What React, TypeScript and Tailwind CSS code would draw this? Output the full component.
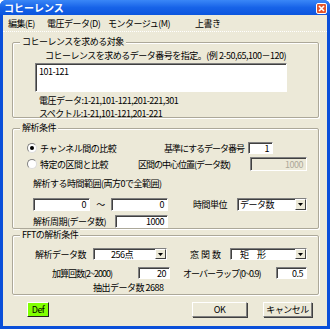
import React from 'react'

const sunken =
  'border border-t-[#808080] border-l-[#808080] border-b-white border-r-white shadow-[inset_1px_1px_0_#404040]'

function Field({ w, h, value, disabled }: { w: number; h: number; value: string; disabled?: boolean }) {
  return (
    <div
      className={`${sunken} flex items-center justify-end pr-[3px] leading-none ${
        disabled ? 'bg-[#ece9d8] text-[#aca899]' : 'bg-white'
      }`}
      style={{ width: w, height: h }}
    >
      {value}
    </div>
  )
}

function Combo({ w, h, text, pl, wide }: { w: number; h: number; text: string; pl: number; wide?: boolean }) {
  return (
    <div className={`${sunken} bg-white flex items-center leading-none`} style={{ width: w, height: h }}>
      <span className={`flex-1 ${wide ? 'tracking-[3px]' : ''}`} style={{ paddingLeft: pl }}>
        {text}
      </span>
      <div className="w-[11px] h-full flex items-center justify-center bg-[#ece9d8] border border-t-white border-l-white border-b-[#404040] border-r-[#404040]">
        <svg width="5" height="3" viewBox="0 0 5 3">
          <path d="M0 0h5L2.5 3z" fill="#000" />
        </svg>
      </div>
    </div>
  )
}

function Radio({ checked }: { checked?: boolean }) {
  return (
    <div className="w-[10px] h-[10px] rounded-full bg-white border border-t-[#808080] border-l-[#808080] border-b-[#dcdcdc] border-r-[#dcdcdc] flex items-center justify-center">
      {checked && <div className="w-[4px] h-[4px] rounded-full bg-black" />}
    </div>
  )
}

function Group({ label, h, children }: { label: string; h: number; children: React.ReactNode }) {
  return (
    <div
      className="relative ml-[9px] w-[307px] border border-[#aca899] rounded-[2px] shadow-[inset_1px_1px_0_#fff,1px_1px_0_#fff]"
      style={{ height: h }}
    >
      <span className="absolute left-[7px] -top-[7px] px-[2px] bg-[#ece9d8] leading-[12px]">{label}</span>
      {children}
    </div>
  )
}

export default function App() {
  return (
    <div className="w-[330px] h-[329px] bg-[#0a4fd9] rounded-t-[6px] overflow-hidden flex flex-col font-['Noto_Sans_CJK_JP',sans-serif] text-[9px] tracking-[-0.5px] text-black">
      {/* タイトルバー */}
      <div className="h-[15px] flex items-center justify-between pl-[4px] pr-[3px] bg-gradient-to-b from-[#3a87f7] via-[#1763e8] to-[#0b55de]">
        <span className="text-white font-bold text-[10px] leading-none tracking-[0px]">コヒーレンス</span>
        <div className="w-[11px] h-[11px] rounded-[2px] border border-white bg-[#e2542a] flex items-center justify-center mt-[2px]">
          <svg width="7" height="7" viewBox="0 0 7 7">
            <path d="M1 1l5 5M6 1l-5 5" stroke="#fff" strokeWidth="1.6" />
          </svg>
        </div>
      </div>

      <div className="mx-[3px] mb-[3px] flex-1 bg-[#ece9d8] flex flex-col">
        {/* メニュー */}
        <div className="h-[17px] flex items-center border-b border-dotted border-white leading-none">
          <span className="ml-[5px] w-[39px]">編集(E)</span>
          <span className="w-[61px]">電圧データ(D)</span>
          <span className="w-[87px]">モンタージュ(M)</span>
          <span>上書き</span>
        </div>

        {/* 対象 */}
        <div className="mt-[10px]">
          <Group label="コヒーレンスを求める対象" h={76}>
            <div className="mt-[7px] ml-[32px] leading-[11px] whitespace-nowrap">コヒーレンスを求めるデータ番号を指定。(例 2-50,65,100－120)</div>
            <div className={`${sunken} mt-[2px] ml-[22px] w-[252px] h-[29px] bg-white pl-[3px] pt-[3px] leading-[9px]`}>101-121</div>
            <div className="mt-[3px] ml-[26px] leading-[11px]">電圧データ:1-21,101-121,201-221,301</div>
            <div className="mt-[2px] ml-[26px] leading-[11px]">スペクトル:1-21,101-121,201-221</div>
          </Group>
        </div>

        {/* 解析条件 */}
        <div className="mt-[10px]">
          <Group label="解析条件" h={101}>
            <div className="mt-[13px] h-[12px] flex items-center leading-none">
              <div className="ml-[14px] w-[137px] flex items-center gap-[3px]">
                <Radio checked />
                <span>チャンネル間の比較</span>
              </div>
              <span className="w-[84px] whitespace-nowrap tracking-[-1px]">基準にするデータ番号</span>
              <Field w={25} h={12} value="1" />
            </div>
            <div className="mt-[3px] h-[14px] flex items-center leading-none">
              <div className="ml-[14px] w-[111px] flex items-center gap-[3px]">
                <Radio />
                <span>特定の区間と比較</span>
              </div>
              <span className="w-[112px] whitespace-nowrap tracking-[-1px]">区間の中心位置(データ数)</span>
              <Field w={57} h={14} value="1000" disabled />
            </div>
            <div className="mt-[7px] ml-[20px] leading-[11px]">解析する時間範囲(両方0で全範囲)</div>
            <div className="mt-[9px] h-[13px] flex items-center leading-none">
              <div className="ml-[20px]">
                <Field w={57} h={13} value="0" />
              </div>
              <span className="w-[21px] text-center">～</span>
              <Field w={57} h={13} value="0" />
              <span className="ml-[25px] w-[44px]">時間単位</span>
              <Combo w={70} h={13} text="データ数" pl={2} />
            </div>
            <div className="mt-[4px] h-[13px] flex items-center leading-none">
              <span className="ml-[20px] w-[82px] whitespace-nowrap">解析周期(データ数)</span>
              <Field w={53} h={13} value="1000" />
            </div>
          </Group>
        </div>

        {/* FFT */}
        <div className="mt-[6px]">
          <Group label="FFTの解析条件" h={60}>
            <div className="mt-[12px] h-[12px] flex items-center leading-none">
              <span className="ml-[22px] w-[58px]">解析データ数</span>
              <Combo w={74} h={12} text="256点" pl={17} />
              <span className="ml-[23px] w-[40px] tracking-[2px]">窓関数</span>
              <Combo w={77} h={12} text="矩 形" pl={9} wide />
            </div>
            <div className="mt-[7px] h-[12px] flex items-center leading-none">
              <span className="ml-[39px] w-[86px] whitespace-nowrap tracking-[-1px]">加算回数(2~2000)</span>
              <Field w={32} h={12} value="20" />
              <span className="ml-[13px] w-[93px] whitespace-nowrap tracking-[-1px]">オーバーラップ(0~0.9)</span>
              <Field w={31} h={12} value="0.5" />
            </div>
            <div className="mt-[3px] ml-[80px] leading-[11px]">抽出データ数 2688</div>
          </Group>
        </div>

        {/* ボタン */}
        <div className="mt-[7px] h-[15px] flex leading-none">
          <div className="ml-[24px] w-[22px] h-[15px] flex items-center justify-center bg-[#80ff00] border border-t-white border-l-white border-b-[#202020] border-r-[#202020]">
            Def
          </div>
          <div className="ml-[143px] w-[55px] h-[15px] flex items-center justify-center bg-[#ece9d8] border border-t-white border-l-white border-b-[#808080] border-r-[#808080] shadow-[1px_1px_0_#404040]">
            OK
          </div>
          <div className="ml-[16px] w-[49px] h-[15px] flex items-center justify-center bg-[#ece9d8] border border-t-white border-l-white border-b-[#808080] border-r-[#808080] shadow-[1px_1px_0_#404040]">
            キャンセル
          </div>
        </div>
      </div>
    </div>
  )
}
